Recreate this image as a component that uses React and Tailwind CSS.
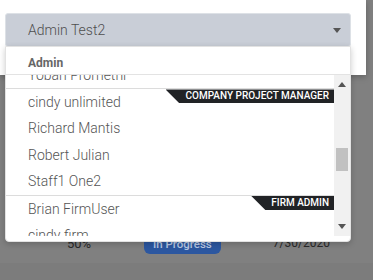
import { useState } from "react";

const GROUPS = [
  { role: null, people: ["Yoban Promethi"] },
  {
    role: "Company Project Manager",
    people: ["cindy unlimited", "Richard Mantis", "Robert Julian", "Staff1 One2"],
  },
  { role: "Firm Admin", people: ["Brian FirmUser", "cindy firm"] },
];

function RoleTag({ label }) {
  return (
    <span className="absolute right-0 top-0 flex h-[14px] items-center bg-[#212326] pl-[20px] pr-[5px] text-[10px] font-medium uppercase leading-none text-white [clip-path:polygon(0_0,100%_0,100%_100%,14px_100%)]">
      {label}
    </span>
  );
}

function Caret({ up }) {
  return (
    <svg width="8" height="5" viewBox="0 0 8 5" className={up ? "rotate-180" : ""}>
      <path d="M0 0h8L4 5z" fill="#555" />
    </svg>
  );
}

export default function App() {
  const [value] = useState("Admin Test2");

  return (
    <div className="relative h-[280px] w-[373px] overflow-hidden bg-[#808080] font-['Roboto',sans-serif]">
      {/* page behind the overlay */}
      <div className="flex h-full flex-col justify-end">
        <div className="flex h-[32px] items-start pt-[3px] text-[13px] text-[#2a2a2a]">
          <span className="w-[80px] pl-[67px]">50%</span>
          <span className="ml-[64px] rounded-[6px] bg-[#2c57a0] px-[9px] pb-[1px] pt-[2px] text-[11.5px] font-medium text-[#b9c8e3]">
            In Progress
          </span>
          <span className="ml-[52px] text-[12px]">7/30/2020</span>
        </div>
        <div className="h-[17px] bg-[#7c7c7c]" />
      </div>

      {/* modal */}
      <div className="absolute left-0 top-0 h-[75px] w-[366px] bg-white px-[5px] pt-[13px] shadow-[0_2px_6px_rgba(0,0,0,0.25)]">
        <div className="relative">
          <button className="flex h-[34px] w-[346px] items-center justify-between rounded-[3px] border border-[#dde1e6] bg-[#c9ced7] pl-[22px] pr-[9px] text-[14px] font-light text-[#4f4f4f]">
            <span>{value}</span>
            <Caret />
          </button>

          {/* dropdown menu */}
          <div className="absolute left-0 top-[33px] z-10 flex h-[196px] w-[346px] flex-col rounded-b-[4px] border border-[#e2e2e2] bg-white shadow-[0_2px_6px_rgba(0,0,0,0.2)]">
            <div className="flex h-[28px] shrink-0 items-center border-b border-[#e3e3e3] pl-[22px] pt-[5px] text-[12px] font-bold text-[#666]">
              Admin
            </div>
            <div className="flex h-[161px] shrink-0">
              <div className="flex-1 overflow-hidden">
                <div className="-mt-[13px]">
                  {GROUPS.map((g, gi) => (
                    <div key={gi} className={`relative ${gi > 0 ? "border-t border-[#dcdcdc]" : ""}`}>
                      {g.role && <RoleTag label={g.role} />}
                      {g.people.map((p) => (
                        <div key={p} className="flex h-[26.4px] items-center pl-[22px] text-[14px] font-light text-[#555]">
                          {p}
                        </div>
                      ))}
                    </div>
                  ))}
                </div>
              </div>
              {/* scrollbar */}
              <div className="flex w-[16px] flex-col items-center justify-between bg-[#f1f1f1] py-[7px]">
                <Caret up />
                <div className="mb-[48px] mt-[56px] h-[23px] w-[12px] bg-[#c1c1c1]" />
                <Caret />
              </div>
            </div>
          </div>
        </div>
      </div>
    </div>
  );
}
